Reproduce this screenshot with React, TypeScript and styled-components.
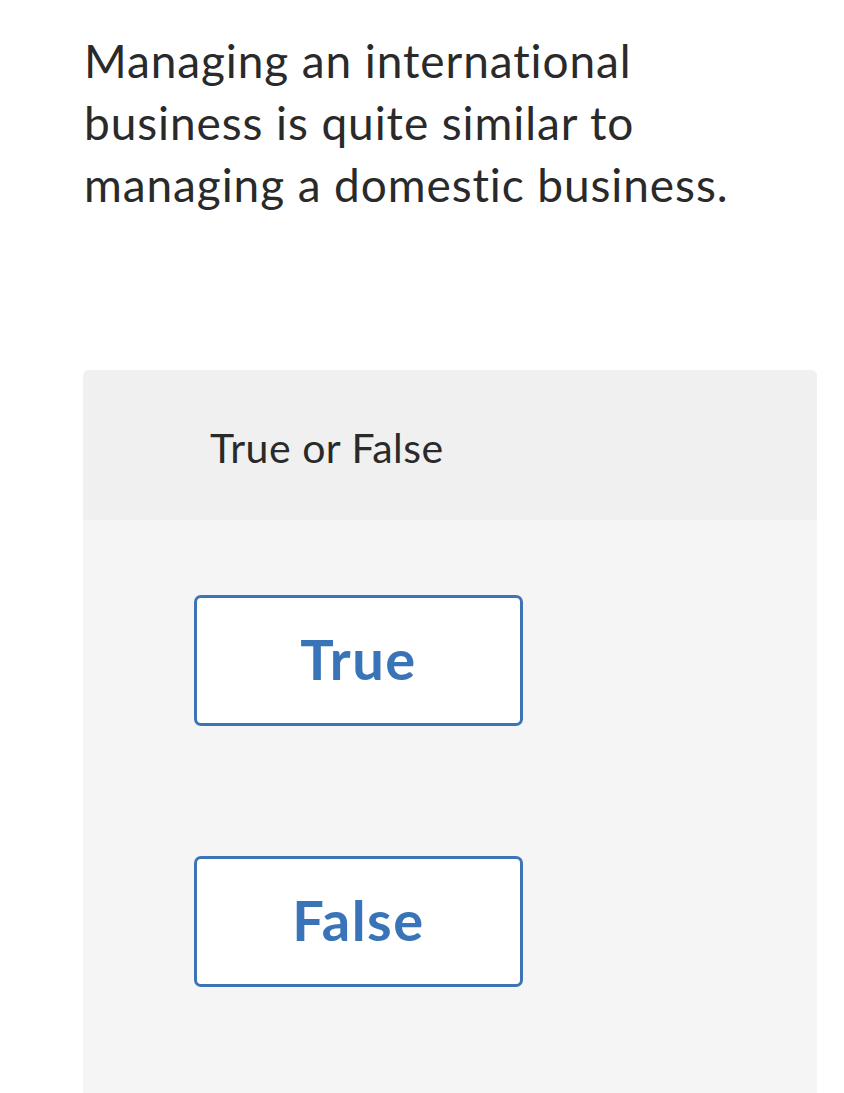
import React from "react"
import styled, { createGlobalStyle } from "styled-components"

const GlobalStyle = createGlobalStyle`
  html, body {
    margin: 0;
    padding: 0;
    background: #ffffff;
    font-family: Lato, "Noto Sans", sans-serif;
    color: #2b2b2b;
    font-variant-ligatures: none;
  }
`

const Page = styled.main`
  padding: 30px 27px 0 83px;
`

const Question = styled.p`
  margin: 0 0 154px 1px;
  font-size: 46px;
  line-height: 62px;
  letter-spacing: 0.9px;
  font-weight: 400;
  color: #2a2a2a;
  max-width: 700px;
`

const Card = styled.section`
  width: 734px;
  border-radius: 6px 6px 0 0;
  overflow: hidden;
  background: #f5f5f5;
  min-height: 740px;
`

const CardHeader = styled.header`
  height: 150px;
  background: #f0f0f0;
  display: flex;
  align-items: center;
  padding: 4px 0 0 127px;
  box-sizing: border-box;
  font-size: 41px;
  letter-spacing: 0.5px;
  color: #2a2a2a;
`

const Choices = styled.div`
  display: flex;
  flex-direction: column;
  gap: 130px;
  padding: 75px 0 0 111px;
`

const Choice = styled.button`
  width: 329px;
  height: 131px;
  box-sizing: border-box;
  border: 3px solid #3d74b6;
  border-radius: 7px;
  background: #ffffff;
  color: #3a74b8;
  font-family: Lato, "Noto Sans", sans-serif;
  font-size: 56px;
  font-weight: 700;
  letter-spacing: 1.5px;
  padding: 0 0 4px;
  cursor: pointer;
`

export default function App() {
  return (
    <>
      <GlobalStyle />
      <Page>
        <Question>
          Managing an international business is quite similar to managing a
          domestic business.
        </Question>
        <Card>
          <CardHeader>True or False</CardHeader>
          <Choices>
            <Choice>True</Choice>
            <Choice>False</Choice>
          </Choices>
        </Card>
      </Page>
    </>
  )
}
